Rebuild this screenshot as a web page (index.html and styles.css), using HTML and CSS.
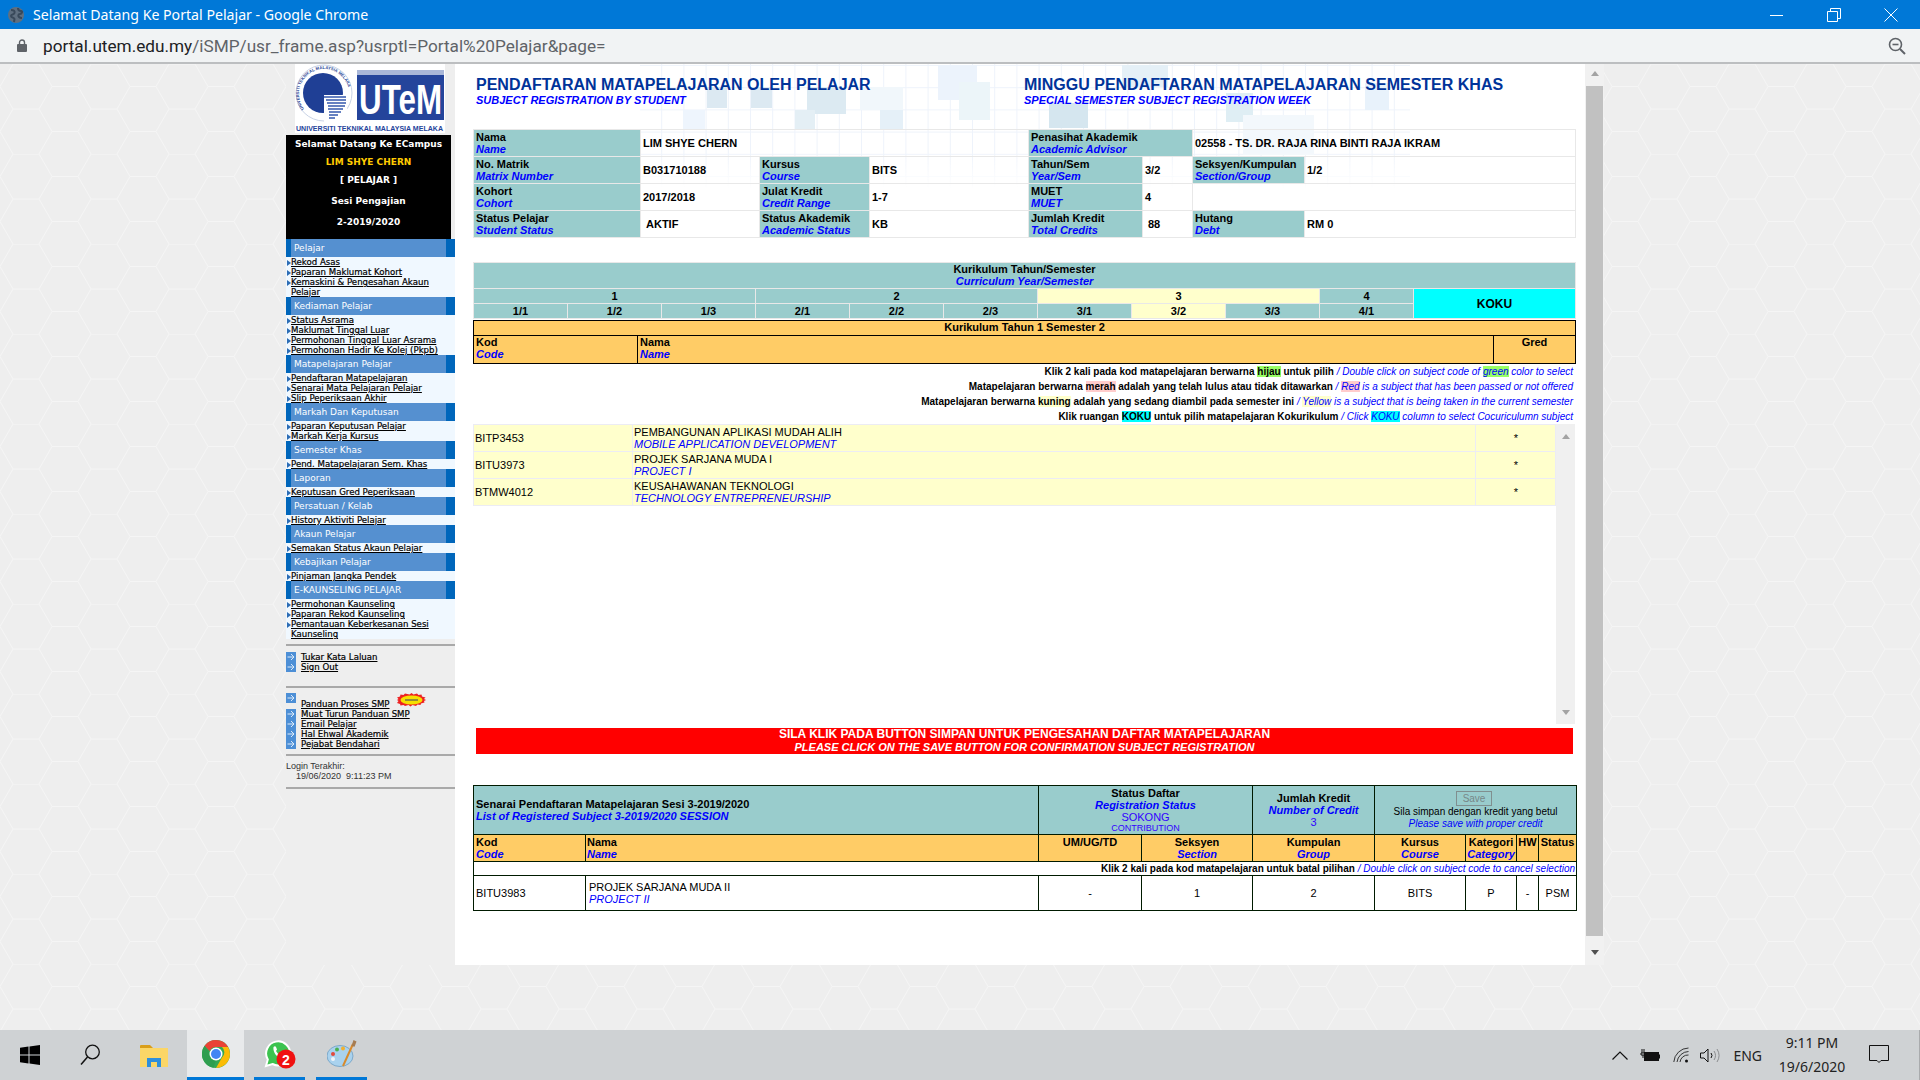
FILE: index.html
```html
<!DOCTYPE html>
<html lang="ms">
<head>
  <meta charset="UTF-8" />
  <title>Selamat Datang Ke Portal Pelajar</title>
  <link rel="stylesheet" href="styles.css">
</head>
<body>
  <svg class="defs" width="0" height="0">
    <symbol id="box-arrow" viewBox="0 0 10 10">
      <rect width="10" height="10" fill="#4d8fd6"/>
      <path d="M1.500 5h6M5 2 8 5 5 8" fill="none" stroke="#dbe9f8" stroke-width="1"/>
    </symbol>
  </svg>

  <div class="titlebar">
    <svg class="globe" width="16" height="16" viewBox="0 0 16 16"><circle cx="8" cy="8" r="8" fill="#5f6f80"/><path d="M3 3c3 0 4 1 3.500 3S3 7 3 9s3 1 3.500 3L6 15M10 1c0 2 1 3 3 3s1 3-1 3-2 2-1 3 2 1 3 1" fill="none" stroke="#39495a" stroke-width="2"/></svg>
    <span class="title-text">Selamat Datang Ke Portal Pelajar - Google Chrome</span>
    <div class="win-buttons">
      <svg width="14" height="14" viewBox="0 0 14 14"><path d="M0 7.500h13" stroke="#fff"/></svg>
      <svg width="14" height="14" viewBox="0 0 14 14"><path d="M.5 3.500h10v10H.5zM3.500 3.500v-3h10v10h-3" fill="none" stroke="#fff"/></svg>
      <svg width="14" height="14" viewBox="0 0 14 14"><path d="M.5.500l13 13M13.500.500l-13 13" stroke="#fff"/></svg>
    </div>
  </div>

  <div class="addressbar">
    <svg class="lock" width="10" height="13" viewBox="0 0 10 13"><path d="M2.500 6V3.500a2.500 2.500 0 0 1 5 0V6" fill="none" stroke="#5f6368" stroke-width="1.400"/><rect y="5" width="10" height="8" rx="1" fill="#5f6368"/></svg>
    <span class="url"><span class="url-host">portal.utem.edu.my</span>/iSMP/usr_frame.asp?usrptl=Portal%20Pelajar&amp;page=</span>
    <svg class="zoom-out" width="18" height="18" viewBox="0 0 18 18"><circle cx="7.500" cy="7.500" r="6" fill="none" stroke="#5f6368" stroke-width="1.600"/><path d="M4.500 7.500h6" stroke="#5f6368" stroke-width="1.600"/><path d="M12 12l5 5" stroke="#5f6368" stroke-width="2"/></svg>
  </div>

  <div class="viewport">
    <svg class="hex-bg" width="1920" height="966">
      <defs>
        <pattern id="hex" width="78" height="90" patternUnits="userSpaceOnUse">
          <path d="M0 22.500 13 0h26l13 22.500L39 45H13zM52 22.500h26M39 45l13 22.500h26M13 45 0 67.500M39 90l13-22.500M13 90 0 67.500" fill="none" stroke="#f5f5f5" stroke-width="1"/>
        </pattern>
      </defs>
      <rect width="1920" height="966" fill="url(#hex)"/>
    </svg>

    <aside class="sidebar">
      <div class="logo">
        <svg width="150" height="69" viewBox="0 0 150 69">
          <defs>
            <path id="ring" d="M9 45A25 25 0 1 1 49 45"/>
          </defs>
          <circle cx="29" cy="29" r="28" fill="#fff" stroke="#c9d3e6"/>
          <text class="ring-text"><textPath href="#ring">UNIVERSITI TEKNIKAL MALAYSIA MELAKA</textPath></text>
          <circle cx="28" cy="29" r="20" fill="#1f3f95"/>
          <path d="M29 31h23v27h-23z" fill="#fff"/>
          <path d="M29 33h22M31 36h20M32 39h19M33 42h17M33 45h15M34 48h12M34 51h9M34 54h6" stroke="#3558ad" stroke-width="1.500"/>
          <rect x="62" y="6" width="87" height="50" fill="#a9b7d8"/>
          <rect x="62" y="11" width="87" height="45" fill="#24449b"/>
          <text class="logo-mark" x="64" y="50" textLength="83" lengthAdjust="spacingAndGlyphs">UTeM</text>
          <text class="logo-name" x="1" y="67" textLength="147" lengthAdjust="spacingAndGlyphs">UNIVERSITI TEKNIKAL MALAYSIA MELAKA</text>
        </svg>
      </div>

      <div class="welcome">
        <p class="welcome-line">Selamat Datang Ke ECampus</p>
        <p class="welcome-line welcome-name">LIM SHYE CHERN</p>
        <p class="welcome-line">[ PELAJAR ]</p>
        <p class="welcome-line welcome-gap">Sesi Pengajian</p>
        <p class="welcome-line welcome-gap">2-2019/2020</p>
      </div>

      <h3 class="menu-head">Pelajar</h3>
      <ul class="menu">
        <li><a href="#">Rekod Asas</a></li>
        <li><a href="#">Paparan Maklumat Kohort</a></li>
        <li><a href="#">Kemaskini &amp; Pengesahan Akaun Pelajar</a></li>
      </ul>
      <h3 class="menu-head">Kediaman Pelajar</h3>
      <ul class="menu">
        <li><a href="#">Status Asrama</a></li>
        <li><a href="#">Maklumat Tinggal Luar</a></li>
        <li><a href="#">Permohonan Tinggal Luar Asrama</a></li>
        <li><a href="#">Permohonan Hadir Ke Kolej (Pkpb)</a></li>
      </ul>
      <h3 class="menu-head">Matapelajaran Pelajar</h3>
      <ul class="menu">
        <li><a href="#">Pendaftaran Matapelajaran</a></li>
        <li><a href="#">Senarai Mata Pelajaran Pelajar</a></li>
        <li><a href="#">Slip Peperiksaan Akhir</a></li>
      </ul>
      <h3 class="menu-head">Markah Dan Keputusan</h3>
      <ul class="menu">
        <li><a href="#">Paparan Keputusan Pelajar</a></li>
        <li><a href="#">Markah Kerja Kursus</a></li>
      </ul>
      <h3 class="menu-head">Semester Khas</h3>
      <ul class="menu">
        <li><a href="#">Pend. Matapelajaran Sem. Khas</a></li>
      </ul>
      <h3 class="menu-head">Laporan</h3>
      <ul class="menu">
        <li><a href="#">Keputusan Gred Peperiksaan</a></li>
      </ul>
      <h3 class="menu-head">Persatuan / Kelab</h3>
      <ul class="menu">
        <li><a href="#">History Aktiviti Pelajar</a></li>
      </ul>
      <h3 class="menu-head">Akaun Pelajar</h3>
      <ul class="menu">
        <li><a href="#">Semakan Status Akaun Pelajar</a></li>
      </ul>
      <h3 class="menu-head">Kebajikan Pelajar</h3>
      <ul class="menu">
        <li><a href="#">Pinjaman Jangka Pendek</a></li>
      </ul>
      <h3 class="menu-head">E-KAUNSELING PELAJAR</h3>
      <ul class="menu">
        <li><a href="#">Permohonan Kaunseling</a></li>
        <li><a href="#">Paparan Rekod Kaunseling</a></li>
        <li><a href="#">Pemantauan Keberkesanan Sesi Kaunseling</a></li>
      </ul>

      <hr class="side-rule rule-first">
      <ul class="tools">
        <li><svg class="tool-ico" width="10" height="10"><use href="#box-arrow"/></svg><a href="#">Tukar Kata Laluan</a></li>
        <li><svg class="tool-ico" width="10" height="10"><use href="#box-arrow"/></svg><a href="#">Sign Out</a></li>
      </ul>
      <hr class="side-rule rule-wide">
      <ul class="tools">
        <li class="guide-first">
          <svg class="tool-ico" width="10" height="10"><use href="#box-arrow"/></svg><a href="#">Panduan Proses SMP</a>
          <svg class="burst" width="29" height="14" viewBox="0 0 29 14"><path d="M14.500 0l2 1.500L20 .5l1.500 1.500 3-.5.500 2 3.500 1L27 6l2 1-2 1 .5 1.500-3.500 1-.5 1.500-3-.5-1.500 1.500-3.500-1-2 1.500-2-1.500-3.500 1L6.500 12l-3 .5-.5-1.500-3-1L1.500 8 0 7l1.500-1L0 4.500 3 3.500 3.500 1.500l3 .5L8 .5l4.500 1z" fill="#ee2222"/><ellipse cx="14.500" cy="7" rx="11" ry="4.500" fill="#f5e000"/><path d="M8 7h13" stroke="#555" stroke-width="1.200"/></svg>
        </li>
        <li><svg class="tool-ico" width="10" height="10"><use href="#box-arrow"/></svg><a href="#">Muat Turun Panduan SMP</a></li>
        <li><svg class="tool-ico" width="10" height="10"><use href="#box-arrow"/></svg><a href="#">Email Pelajar</a></li>
        <li><svg class="tool-ico" width="10" height="10"><use href="#box-arrow"/></svg><a href="#">Hal Ehwal Akademik</a></li>
        <li><svg class="tool-ico" width="10" height="10"><use href="#box-arrow"/></svg><a href="#">Pejabat Bendahari</a></li>
      </ul>
      <hr class="side-rule">
      <div class="last-login">
        <div>Login Terakhir:</div>
        <div class="last-login-time">19/06/2020&nbsp; 9:11:23 PM</div>
      </div>
      <hr class="side-rule rule-last">
    </aside>

    <main class="main">
      <svg class="watermark" width="770" height="125">
        <defs>
          <pattern id="grid" x="-1" y="1" width="22.200" height="22.200" patternUnits="userSpaceOnUse">
            <path d="M0 0h22.200M0 0v22.200" stroke="#eef3fb" stroke-width="2" fill="none"/>
          </pattern>
        </defs>
        <rect width="770" height="125" fill="url(#grid)"/>
        <rect x="67" y="23" width="20" height="21" fill="#dce9f2"/>
        <rect x="111" y="23" width="21" height="21" fill="#dce9f2"/>
        <rect x="167" y="23" width="39" height="27" fill="#dceaf2"/>
        <rect x="155" y="46" width="20" height="20" fill="#e4eff5"/>
        <rect x="43" y="46" width="22" height="20" fill="#eef5fd"/>
        <rect x="240" y="46" width="23" height="20" fill="#e5f0f8"/>
        <rect x="220" y="23" width="43" height="23" fill="#f1f7fb"/>
        <rect x="298" y="1" width="39" height="35" fill="#ecf3fc"/>
        <rect x="319" y="18" width="31" height="38" fill="#ecf5f9"/>
        <rect x="409" y="39" width="39" height="25" fill="#d5e6ef"/>
        <rect x="482" y="1" width="46" height="22" fill="#e5f0f7"/>
        <rect x="586" y="29" width="27" height="29" fill="#dfeef4"/>
        <rect x="603" y="51" width="71" height="40" fill="#f3f8fc"/>
        <rect x="725" y="19" width="24" height="27" fill="#e8f2fb"/>
      </svg>

      <header class="page-head">
        <div class="page-title">
          <h1>PENDAFTARAN MATAPELAJARAN OLEH PELAJAR</h1>
          <h2>SUBJECT REGISTRATION BY STUDENT</h2>
        </div>
        <div class="page-title">
          <h1>MINGGU PENDAFTARAN MATAPELAJARAN SEMESTER KHAS</h1>
          <h2>SPECIAL SEMESTER SUBJECT REGISTRATION WEEK</h2>
        </div>
      </header>

      <table class="info">
        <colgroup>
          <col class="i1"><col class="i2"><col class="i3"><col class="i4"><col class="i5"><col class="i6"><col class="i7"><col class="i8">
        </colgroup>
        <tr>
          <td class="lbl">Nama<em>Name</em></td>
          <td colspan="3" class="val">LIM SHYE CHERN</td>
          <td colspan="2" class="lbl">Penasihat Akademik<em>Academic Advisor</em></td>
          <td colspan="2" class="val">02558 - TS. DR. RAJA RINA BINTI RAJA IKRAM</td>
        </tr>
        <tr>
          <td class="lbl">No. Matrik<em>Matrix Number</em></td>
          <td class="val">B031710188</td>
          <td class="lbl">Kursus<em>Course</em></td>
          <td class="val">BITS</td>
          <td class="lbl">Tahun/Sem<em>Year/Sem</em></td>
          <td class="val">3/2</td>
          <td class="lbl">Seksyen/Kumpulan<em>Section/Group</em></td>
          <td class="val">1/2</td>
        </tr>
        <tr>
          <td class="lbl">Kohort<em>Cohort</em></td>
          <td class="val">2017/2018</td>
          <td class="lbl">Julat Kredit<em>Credit Range</em></td>
          <td class="val">1-7</td>
          <td class="lbl">MUET<em>MUET</em></td>
          <td class="val">4</td>
          <td colspan="2" class="val"></td>
        </tr>
        <tr>
          <td class="lbl">Status Pelajar<em>Student Status</em></td>
          <td class="val val-in">AKTIF</td>
          <td class="lbl">Status Akademik<em>Academic Status</em></td>
          <td class="val">KB</td>
          <td class="lbl">Jumlah Kredit<em>Total Credits</em></td>
          <td class="val val-in">88</td>
          <td class="lbl">Hutang<em>Debt</em></td>
          <td class="val">RM 0</td>
        </tr>
      </table>

      <table class="curriculum">
        <colgroup>
          <col class="sem"><col class="sem"><col class="sem"><col class="sem"><col class="sem"><col class="sem"><col class="sem"><col class="sem"><col class="sem"><col class="sem"><col class="koku-col">
        </colgroup>
        <tr class="cur-head">
          <td colspan="11">Kurikulum Tahun/Semester<em>Curriculum Year/Semester</em></td>
        </tr>
        <tr class="cur-row">
          <td colspan="3">1</td>
          <td colspan="3">2</td>
          <td colspan="3" class="on">3</td>
          <td>4</td>
          <td rowspan="2" class="koku">KOKU</td>
        </tr>
        <tr class="cur-row">
          <td>1/1</td><td>1/2</td><td>1/3</td>
          <td>2/1</td><td>2/2</td><td>2/3</td>
          <td>3/1</td><td class="on">3/2</td><td>3/3</td>
          <td>4/1</td>
        </tr>
      </table>

      <table class="offered-head">
        <colgroup><col class="o1"><col class="o2"><col class="o3"></colgroup>
        <tr class="offered-title"><th colspan="3">Kurikulum Tahun 1 Semester 2</th></tr>
        <tr>
          <th class="left">Kod<em>Code</em></th>
          <th class="left">Nama<em>Name</em></th>
          <th class="gred">Gred</th>
        </tr>
      </table>

      <div class="notes">
        <p>Klik 2 kali pada kod matapelajaran berwarna <mark class="m-green">hijau</mark> untuk pilih <i>/ Double click on subject code of <mark class="m-green">green</mark> color to select</i></p>
        <p>Matapelajaran berwarna <mark class="m-red">merah</mark> adalah yang telah lulus atau tidak ditawarkan <i>/ <mark class="m-red">Red</mark> is a subject that has been passed or not offered</i></p>
        <p>Matapelajaran berwarna <mark class="m-yellow">kuning</mark> adalah yang sedang diambil pada semester ini <i>/ <mark class="m-yellow">Yellow</mark> is a subject that is being taken in the current semester</i></p>
        <p>Klik ruangan <mark class="m-cyan">KOKU</mark> untuk pilih matapelajaran Kokurikulum <i>/ Click <mark class="m-cyan">KOKU</mark> column to select Cocuriculumn subject</i></p>
      </div>

      <div class="subject-frame">
        <table class="subjects">
          <colgroup><col class="s1"><col class="s2"><col class="s3"></colgroup>
          <tr>
            <td>BITP3453</td>
            <td>PEMBANGUNAN APLIKASI MUDAH ALIH<em>MOBILE APPLICATION DEVELOPMENT</em></td>
            <td class="star">*</td>
          </tr>
          <tr>
            <td>BITU3973</td>
            <td>PROJEK SARJANA MUDA I<em>PROJECT I</em></td>
            <td class="star">*</td>
          </tr>
          <tr>
            <td>BTMW4012</td>
            <td>KEUSAHAWANAN TEKNOLOGI<em>TECHNOLOGY ENTREPRENEURSHIP</em></td>
            <td class="star">*</td>
          </tr>
        </table>
        <div class="mini-scroll">
          <span class="tri-up"></span>
          <span class="tri-down"></span>
        </div>
      </div>

      <div class="save-banner">
        SILA KLIK PADA BUTTON SIMPAN UNTUK PENGESAHAN DAFTAR MATAPELAJARAN
        <em>PLEASE CLICK ON THE SAVE BUTTON FOR CONFIRMATION SUBJECT REGISTRATION</em>
      </div>

      <table class="registered">
        <colgroup>
          <col class="r1"><col class="r2"><col class="r3"><col class="r4"><col class="r5"><col class="r6"><col class="r7"><col class="r8"><col class="r9">
        </colgroup>
        <tr class="reg-head">
          <td colspan="2" class="left reg-title">Senarai Pendaftaran Matapelajaran Sesi 3-2019/2020<em>List of Registered Subject 3-2019/2020 SESSION</em></td>
          <td colspan="2"><b>Status Daftar</b><em>Registration Status</em><span class="sokong">SOKONG</span><span class="contrib">CONTRIBUTION</span></td>
          <td><b>Jumlah Kredit</b><em>Number of Credit</em><span class="credit-num">3</span></td>
          <td colspan="4" class="save-cell">
            <button class="save-btn" disabled>Save</button>
            <span class="save-note">Sila simpan dengan kredit yang betul</span>
            <i class="save-note-en">Please save with proper credit</i>
          </td>
        </tr>
        <tr class="reg-cols">
          <td class="left">Kod<em>Code</em></td>
          <td class="left name-head">Nama<em>Name</em></td>
          <td>UM/UG/TD</td>
          <td>Seksyen<em>Section</em></td>
          <td>Kumpulan<em>Group</em></td>
          <td>Kursus<em>Course</em></td>
          <td class="tight">Kategori<em>Category</em></td>
          <td class="tight">HW</td>
          <td class="tight">Status</td>
        </tr>
        <tr class="reg-note">
          <td colspan="9">Klik 2 kali pada kod matapelajaran untuk batal pilihan <i>/ Double click on subject code to cancel selection</i></td>
        </tr>
        <tr class="reg-data">
          <td class="left">BITU3983</td>
          <td class="left reg-name">PROJEK SARJANA MUDA II<em>PROJECT II</em></td>
          <td>-</td>
          <td>1</td>
          <td>2</td>
          <td>BITS</td>
          <td>P</td>
          <td>-</td>
          <td>PSM</td>
        </tr>
      </table>
    </main>

    <div class="page-scroll">
      <span class="tri-up"></span>
      <div class="page-thumb"></div>
      <span class="tri-down dark"></span>
    </div>
  </div>

  <footer class="taskbar">
    <div class="task-left">
      <svg class="task-win" width="20" height="20" viewBox="0 0 20 20"><path d="M0 2.800 8.500 1.600v8H0zM9.500 1.500 20 0v9.600H9.500zM0 10.500h8.500v8L0 17.200zM9.500 10.500H20V20L9.500 18.600z" fill="#000"/></svg>
      <svg class="task-search" width="20" height="22" viewBox="0 0 20 22"><circle cx="12.500" cy="8" r="6.800" fill="none" stroke="#111" stroke-width="1.300"/><path d="M7.500 13 1 20.500" stroke="#111" stroke-width="1.500"/></svg>
      <svg class="task-folder" width="28" height="23" viewBox="0 0 28 23"><path d="M0 2a1 1 0 0 1 1-1h9l3 3h-13z" fill="#d99e1a"/><rect y="4" width="28" height="19" fill="#fbd667"/><path d="M7 23v-9h14v9h-4v-5h-6v5z" fill="#2f8fdc"/></svg>
      <div class="task-item task-active">
        <svg width="28" height="28" viewBox="0 0 28 28">
          <circle cx="14" cy="14" r="14" fill="#34a853"/>
          <path d="M14 0a14 14 0 0 1 12.100 7H14a7 7 0 0 0-6.300 4L2.600 5.800A14 14 0 0 1 14 0z" fill="#ea4335"/>
          <path d="M26.100 7A14 14 0 0 1 14 28l6-10.500a7 7 0 0 0 0-10.500z" fill="#fbbc05"/>
          <path d="M2.600 5.800 8 14a6 6 0 0 0 6 6l-2.500 7.800A14 14 0 0 1 2.600 5.800z" fill="#2e9e4f"/>
          <circle cx="14" cy="14" r="6.500" fill="#fff"/>
          <circle cx="14" cy="14" r="5" fill="#4285f4"/>
        </svg>
      </div>
      <div class="task-item task-whatsapp">
        <svg width="32" height="30" viewBox="0 0 32 30">
          <path d="M2 27l1.800-6.500A12 12 0 1 1 8.500 25z" fill="#3cc34f" stroke="#fff" stroke-width="2"/>
          <path d="M9.500 8c1-1 2-1 2.500 0l1 2.500-1 1.500c1 2 2.500 3 4 4l1.500-1.200 2.500 1.200c.5 1 0 2.500-1.500 3-4 1-10-5-9-11z" fill="#fff"/>
          <circle cx="22" cy="20" r="9.500" fill="#f01010"/>
          <text class="badge-num" x="22" y="25.500">2</text>
        </svg>
      </div>
      <div class="task-item task-paint">
        <svg width="30" height="28" viewBox="0 0 30 28">
          <ellipse cx="13" cy="16" rx="13" ry="10.500" fill="#a9d2ee" stroke="#7ea9c9"/>
          <circle cx="6" cy="14" r="2" fill="#e24a3b"/>
          <circle cx="10" cy="9.500" r="2" fill="#4cb050"/>
          <circle cx="16" cy="8.500" r="2" fill="#f3b02e"/>
          <circle cx="6" cy="19" r="2" fill="#f0f4f8"/>
          <path d="M16 26 26 4" stroke="#d88a2b" stroke-width="2"/>
          <path d="M24.500 6 26.500 0l3 1.500L27.500 6.800z" fill="#a67c52"/>
        </svg>
      </div>
    </div>
    <div class="task-tray">
      <svg class="tray-chevron" width="16" height="9" viewBox="0 0 16 9"><path d="M.5 8.500 8 1l7.500 7.500" fill="none" stroke="#111" stroke-width="1.200"/></svg>
      <svg class="tray-battery" width="20" height="13" viewBox="0 0 20 13"><path d="M2 0v4M4 0v4M1 4h4v2H1zM3 6v3" stroke="#111" fill="none"/><rect x="4.500" y="3.500" width="14" height="8" fill="#111" stroke="#111"/><rect x="19" y="5.500" width="1" height="4" fill="#111"/></svg>
      <svg class="tray-wifi" width="17" height="16" viewBox="0 0 17 16"><path d="M.8 15A15 15 0 0 1 15.500 1M4 15A12 12 0 0 1 15.500 4.500M7 15A8 8 0 0 1 15.500 8" fill="none" stroke="#222" stroke-width=".9"/><circle cx="13.500" cy="14" r="1.500" fill="#111"/></svg>
      <svg class="tray-volume" width="20" height="15" viewBox="0 0 20 15"><path d="M.5 5h3.500L8 1v13L4 10H.5z" fill="none" stroke="#111"/><path d="M11 5a4 4 0 0 1 0 5" fill="none" stroke="#111"/><path d="M14 3a8 8 0 0 1 0 9M17 1a12 12 0 0 1 0 13" fill="none" stroke="#8b8d8f"/></svg>
      <span class="tray-lang">ENG</span>
      <div class="tray-clock"><div>9:11 PM</div><div>19/6/2020</div></div>
      <svg class="tray-note" width="20" height="20" viewBox="0 0 20 20"><path d="M.5.500h19v15H12l-2 2-2-2H.5z" fill="none" stroke="#111"/></svg>
    </div>
  </footer>
</body>
</html>
```

FILE: styles.css
```css
* {
  box-sizing: border-box;
  margin: 0;
  padding: 0;
}

body {
  width: 1920px;
  height: 1080px;
  overflow: hidden;
  display: flex;
  flex-direction: column;
  background: #eeeeee;
  font-family: "Liberation Sans", Arial, sans-serif;
  font-size: 11px;
  color: #000;
}

em {
  display: block;
  color: #0000ff;
  font-style: italic;
}

.defs {
  position: absolute;
}

/* window chrome */
.titlebar {
  height: 29px;
  flex: none;
  display: flex;
  align-items: center;
  background: #0078d7;
  color: #fff;
  padding-left: 8px;
}

.title-text {
  margin-left: 9px;
  font-family: "Noto Sans", sans-serif;
  font-size: 14.150px;
}

.win-buttons {
  margin-left: auto;
  display: flex;
  gap: 43px;
  padding-right: 22px;
}

.addressbar {
  height: 35px;
  flex: none;
  display: flex;
  align-items: center;
  background: #f1f3f4;
  border-bottom: 2px solid #bcbec0;
  padding-left: 17px;
  padding-right: 14px;
}

.url {
  margin-left: 16px;
  padding-top: 1px;
  font-family: "Roboto", sans-serif;
  font-size: 17.200px;
  color: #5f6368;
}

.url-host {
  color: #202124;
}

.zoom-out {
  margin-left: auto;
}

.viewport {
  flex: 1;
  position: relative;
  z-index: 0;
  display: flex;
  align-items: flex-start;
  padding-left: 286px;
}

.hex-bg {
  position: absolute;
  left: 0;
  top: 0;
  z-index: -1;
}

/* left menu */
.sidebar {
  width: 169px;
  height: 901px;
  flex: none;
  background: #eeeeee;
  font-family: "DejaVu Sans", sans-serif;
  font-size: 9px;
}

.logo {
  height: 71px;
  padding-left: 9px;
  width: 159px;
}

.logo svg {
  display: block;
  overflow: visible;
  background: #fff;
}

.ring-text {
  font: bold 4.200px "Liberation Sans", sans-serif;
  fill: #1f3f95;
}

.logo-mark {
  font: bold 43px "Liberation Sans", sans-serif;
  fill: #fff;
}

.logo-name {
  font: bold 7px "Liberation Sans", sans-serif;
  fill: #24449b;
}

.welcome {
  width: 165px;
  height: 104px;
  background: #000;
  color: #fff;
  font-weight: bold;
  text-align: center;
}

.welcome-line {
  height: 18px;
  line-height: 18px;
}

.welcome-name {
  color: #ffcc00;
}

.welcome-gap {
  height: 21px;
  line-height: 24px;
}

.menu-head {
  height: 18px;
  line-height: 18px;
  background: #5590d0;
  border-left: 5px solid #0066bb;
  border-right: 9px solid #0066bb;
  padding-left: 3px;
  color: #fff;
  font-weight: normal;
  font-size: 9px;
}

.menu {
  list-style: none;
  background: #f0f8ff;
  font-size: 8.600px;
}

.menu li {
  display: flex;
  line-height: 10px;
  padding-left: 5px;
  position: relative;
}

.menu li::before {
  content: "";
  position: absolute;
  left: 1px;
  top: 3px;
  border-left: 4px solid #2b6cb5;
  border-top: 3.500px solid transparent;
  border-bottom: 3.500px solid transparent;
}

a {
  color: #000;
  text-decoration: underline;
  -webkit-text-stroke: .2px #000;
}

.side-rule {
  height: 2px;
  border: 0;
  background: #a9a9a9;
  margin: 5px 0;
}

.rule-first {
  margin-bottom: 6px;
}

.rule-wide {
  margin-top: 14px;
}

.rule-last {
  margin-top: 6px;
}

.tools {
  list-style: none;
  font-size: 8.600px;
}

.tools li {
  display: flex;
  height: 10px;
  line-height: 10px;
}

.tool-ico {
  flex: none;
  margin-right: 5px;
}

.tools .guide-first {
  height: 16px;
  position: relative;
}

.guide-first a {
  margin-top: 6px;
}

.burst {
  position: absolute;
  left: 111px;
  top: 0;
}

.last-login {
  font-family: "Liberation Sans", sans-serif;
  font-size: 9px;
  line-height: 10px;
  color: #333;
}

.last-login-time {
  padding-left: 10px;
}

/* main frame */
.main {
  width: 1130px;
  height: 901px;
  flex: none;
  background: #fff;
  position: relative;
  z-index: 0;
  padding-left: 18px;
}

.watermark {
  position: absolute;
  left: 185px;
  top: 0;
  z-index: -1;
  mask-image: linear-gradient(#000 70%, transparent);
}

.page-head {
  display: flex;
  height: 65px;
  padding-top: 12px;
}

.page-title {
  width: 548px;
  padding-left: 3px;
}

.page-title h1 {
  font-size: 16px;
  line-height: 17px;
  color: #003399;
}

.page-title h2 {
  font-size: 11px;
  line-height: 15px;
  font-style: italic;
  color: #0000ff;
}

table {
  border-collapse: collapse;
  table-layout: fixed;
  width: 1102px;
}

.info td {
  height: 27px;
  border: 1px solid #e8e8e8;
  font-weight: bold;
  line-height: 12px;
  vertical-align: middle;
}

.i1 { width: 167px; }
.i2 { width: 119px; }
.i3 { width: 110px; }
.i4 { width: 159px; }
.i5 { width: 114px; }
.i6 { width: 50px; }
.i7 { width: 112px; }
.i8 { width: 271px; }

.lbl {
  background: #99cccc;
  padding-left: 2px;
}

.val {
  padding-left: 2px;
}

.val-in {
  padding-left: 5px;
}

.curriculum {
  margin-top: 24px;
}

.sem { width: 94px; }
.koku-col { width: 162px; }

.curriculum td {
  border: 1px solid #e8e8e8;
  background: #99cccc;
  text-align: center;
  font-weight: bold;
  line-height: 12px;
}

.curriculum .on {
  background: #ffffcc;
}

.curriculum .koku {
  background: #00ffff;
  font-size: 12px;
}

.cur-head td {
  height: 26px;
  vertical-align: top;
}

.cur-row td {
  height: 15px;
}

.offered-head {
  margin-top: 1px;
}

.offered-head th {
  border: 1px solid #000;
  background: #ffcc66;
  line-height: 12px;
  vertical-align: top;
  text-align: center;
  padding: 0 2px;
}

.offered-title th {
  height: 15px;
}

.offered-head .left {
  text-align: left;
}

.offered-head .gred {
  height: 28px;
}

.o1 { width: 164px; }
.o2 { width: 856px; }
.o3 { width: 82px; }

.notes {
  width: 1102px;
  height: 60px;
  text-align: right;
  padding-right: 2px;
  font-size: 10px;
  font-weight: bold;
}

.notes p {
  line-height: 15px;
}

.notes i {
  font-weight: normal;
  color: #0000ff;
}

.m-green { background: #99ff66; color: inherit; }
.m-red { background: #ffcccc; color: inherit; }
.m-yellow { background: #ffffcc; color: inherit; }
.m-cyan { background: #00ffff; color: inherit; }

.subject-frame {
  display: flex;
  width: 1102px;
  height: 300px;
}

.subjects {
  width: 1082px;
  height: 81px;
}

.subjects td {
  height: 27px;
  background: #ffffcc;
  border: 1px solid #ececf4;
  line-height: 12px;
  padding-left: 1px;
}

.s1 { width: 159px; }
.s2 { width: 843px; }
.s3 { width: 80px; }

.star {
  text-align: center;
}

.mini-scroll {
  width: 20px;
  background: #f0f0f0;
  display: flex;
  flex-direction: column;
  justify-content: space-between;
  align-items: center;
  padding: 10px 0 9px;
}

.tri-up {
  display: block;
  border-left: 4.500px solid transparent;
  border-right: 4.500px solid transparent;
  border-bottom: 5px solid #a3a3a3;
}

.tri-down {
  display: block;
  border-left: 4.500px solid transparent;
  border-right: 4.500px solid transparent;
  border-top: 5px solid #a3a3a3;
}

.tri-down.dark {
  border-top-color: #505050;
}

.save-banner {
  width: 1097px;
  height: 26px;
  margin: 4px 0 0 3px;
  background: #ff0000;
  color: #fff;
  text-align: center;
  font-size: 12px;
  font-weight: bold;
  line-height: 13px;
}

.save-banner em {
  color: #fff;
  font-size: 11px;
  line-height: 12px;
}

.registered {
  margin-top: 31px;
  width: 1103px;
}

.r1 { width: 112px; }
.r2 { width: 453px; }
.r3 { width: 103px; }
.r4 { width: 111px; }
.r5 { width: 122px; }
.r6 { width: 91px; }
.r7 { width: 51px; }
.r8 { width: 22px; }
.r9 { width: 38px; }

.registered td {
  border: 1px solid #001a00;
  text-align: center;
  line-height: 12px;
}

.registered .left {
  text-align: left;
  padding-left: 2px;
}

.reg-head td {
  height: 49px;
  background: #99cccc;
}

.reg-head em {
  font-weight: bold;
}

.reg-head .reg-title {
  font-weight: bold;
}

.sokong,
.credit-num {
  display: block;
  color: #3300ff;
}

.contrib {
  display: block;
  color: #3300ff;
  font-size: 9px;
  line-height: 10px;
}

.save-cell {
  line-height: 11px;
}

.save-btn {
  display: block;
  width: 36px;
  height: 15px;
  margin: 0 0 0 81px;
  background: #99cccc;
  border: 1px solid #808f8f;
  color: #778888;
  font-family: "Liberation Sans", sans-serif;
  font-size: 10px;
}

.save-note {
  display: block;
  font-size: 10px;
}

.save-note-en {
  display: block;
  font-size: 10px;
  color: #0000ff;
}

.reg-cols td {
  height: 27px;
  background: #ffcc66;
  font-weight: bold;
  vertical-align: top;
  padding-top: 1px;
}

.registered .name-head {
  padding-left: 1px;
}

.registered .tight {
  padding-left: 0;
  padding-right: 0;
}

.registered .reg-note td {
  height: 14px;
  text-align: right;
  padding-right: 1px;
  font-size: 10px;
  font-weight: bold;
}

.reg-note i {
  font-weight: normal;
  color: #0000ff;
}

.reg-data td {
  height: 35px;
}

.registered .reg-name {
  padding-left: 3px;
}

/* outer scrollbar */
.page-scroll {
  width: 19px;
  height: 901px;
  flex: none;
  background: #f1f1f1;
  display: flex;
  flex-direction: column;
  align-items: center;
  padding: 7px 0 7px;
}

.page-thumb {
  width: 17px;
  height: 850px;
  margin: 10px 0 14px;
  background: #c1c1c1;
}

/* windows taskbar */
.taskbar {
  height: 50px;
  flex: none;
  display: flex;
  justify-content: space-between;
  background: #cfd2d4;
  border-right: 1px solid #a9abad;
}

.task-left {
  display: flex;
  align-items: center;
}

.task-win {
  margin-left: 20px;
}

.task-search {
  margin-left: 40px;
}

.task-folder {
  margin-left: 40px;
  margin-right: 19px;
}

.task-item {
  height: 50px;
  display: flex;
  align-items: center;
  justify-content: center;
  border-bottom: 3px solid #0078d7;
}

.task-active {
  width: 57px;
  background: #e8eaeb;
}

.task-whatsapp {
  width: 51px;
  margin-left: 10px;
}

.task-paint {
  width: 51px;
  margin-left: 11px;
}

.badge-num {
  font: bold 14px "Liberation Sans", sans-serif;
  fill: #fff;
  text-anchor: middle;
}

.task-tray {
  display: flex;
  align-items: center;
  padding-right: 30px;
  font-family: "Noto Sans", sans-serif;
  font-size: 14px;
  color: #222;
}

.tray-battery {
  margin-left: 12px;
}

.tray-wifi {
  margin-left: 13px;
}

.tray-volume {
  margin-left: 10px;
}

.tray-lang {
  margin-left: 13px;
}

.tray-clock {
  margin-left: 11px;
  width: 78px;
  text-align: center;
  line-height: 24px;
}

.tray-note {
  margin-left: 18px;
}
```
